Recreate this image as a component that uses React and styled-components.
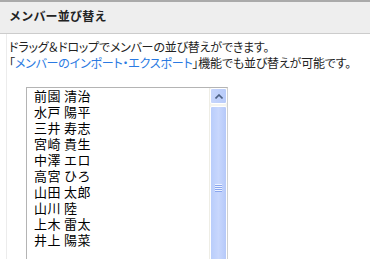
import React from 'react';
import styled, {createGlobalStyle} from "styled-components";

const GlobalStyle = createGlobalStyle`
    body {
        margin: 0;
        background: #fff;
        font-family: "Noto Sans CJK JP", "Noto Sans", sans-serif;
        color: #222;
        overflow: hidden;
    }
`

const Header = styled.div`
    border-top: 2px solid #aaaaaa;
    border-bottom: 1px solid #cccccc;
    background-color: #eeeeee;
    display: flex;
    align-items: center;
    padding: 0 0 5px 9px;
    box-sizing: border-box;
    height: 34px;

    & > h2 {
        margin: 0;
        font-size: 12px;
        font-weight: bold;
        color: #222;
        letter-spacing: 0.2px;
    }
`

const Content = styled.div`
    margin-left: 6px;
    border-left: 1px solid #ececec;
    padding: 5px 0 0 2px;
    height: 240px;
`

const Desc = styled.p`
    margin: 0;
    font-size: 12px;
    line-height: 16px;
    font-feature-settings: "palt";
    letter-spacing: -0.2px;

    a {
        color: #2a7ae2;
        text-decoration: none;
    }
`

const ListBox = styled.div`
    margin: 16px 0 0 17px;
    width: 200px;
    height: 190px;
    border: 1px solid #b4b4b4;
    border-right-color: #d0d0d0;
    display: flex;
`

const NameList = styled.ul`
    list-style: none;
    margin: 0;
    padding: 0 0 0 7px;
    flex: 1;

    li {
        font-size: 13px;
        line-height: 16px;
        letter-spacing: 0.4px;
        color: #000;
        white-space: nowrap;
    }
`

const ScrollBar = styled.div`
    width: 17px;
    display: flex;
    flex-direction: column;
    gap: 2px;
    background: #f4f4f0;
    border-left: 1px solid #eeede5;
`

const ArrowButton = styled.div`
    height: 14px;
    border: 1px solid #fff;
    border-radius: 2px;
    background: linear-gradient(to right, #c6d5fb, #b8cbfa);
    display: flex;
    align-items: center;
    justify-content: center;
`

const Thumb = styled.div`
    flex: 1;
    border: 1px solid #fff;
    border-radius: 2px;
    background: linear-gradient(to right, #b9cdfb, #c8d7fd 50%, #b6c9f9);
    display: flex;
    align-items: flex-start;
    justify-content: center;
    padding-top: 77px;
`

const Grip = styled.div`
    display: flex;
    flex-direction: column;
    gap: 1px;

    span {
        display: block;
        width: 7px;
        height: 1px;
        background: #eef3ff;
        box-shadow: 0 1px 0 #8aa6ef;
    }
`

const names = [
    "前園 清治",
    "水戸 陽平",
    "三井 寿志",
    "宮崎 貴生",
    "中澤 エロ",
    "高宮 ひろ",
    "山田 太郎",
    "山川 陸",
    "上木 雷太",
    "井上 陽菜",
];

function App() {
    return (
        <>
            <GlobalStyle/>
            <Header>
                <h2>メンバー並び替え</h2>
            </Header>
            <Content>
                <Desc>ドラッグ＆ドロップでメンバーの並び替えができます。</Desc>
                <Desc>「<a href="#">メンバーのインポート・エクスポート</a>」機能でも並び替えが可能です。</Desc>

                <ListBox>
                    <NameList>
                        {names.map((n) => <li key={n}>{n}</li>)}
                    </NameList>
                    <ScrollBar>
                        <ArrowButton>
                            <svg width="8" height="5" viewBox="0 0 8 5">
                                <path d="M0.5 4.5 L4 1 L7.5 4.5" fill="none" stroke="#4d6185" strokeWidth="1.6"/>
                            </svg>
                        </ArrowButton>
                        <Thumb>
                            <Grip>
                                <span/>
                                <span/>
                                <span/>
                                <span/>
                            </Grip>
                        </Thumb>
                    </ScrollBar>
                </ListBox>
            </Content>
        </>
    );
}

export default App;
